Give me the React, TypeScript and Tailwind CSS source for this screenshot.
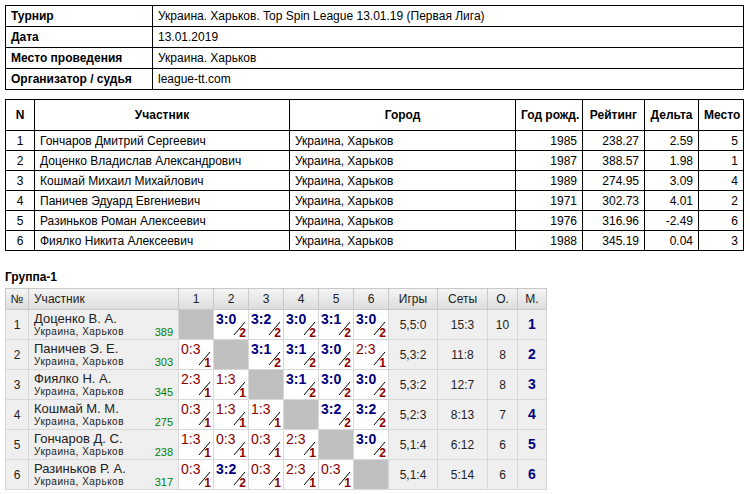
import React from "react";

const players = [
  ["1","Гончаров Дмитрий Сергеевич","Украина, Харьков","1985","238.27","2.59","5"],
  ["2","Доценко Владислав Александрович","Украина, Харьков","1987","388.57","1.98","1"],
  ["3","Кошмай Михаил Михайлович","Украина, Харьков","1989","274.95","3.09","4"],
  ["4","Паничев Эдуард Евгениевич","Украина, Харьков","1971","302.73","4.01","2"],
  ["5","Разиньков Роман Алексеевич","Украина, Харьков","1976","316.96","-2.49","6"],
  ["6","Фиялко Никита Алексеевич","Украина, Харьков","1988","345.19","0.04","3"],
];

type G = { n: string; name: string; r: string; res: (string | null)[]; g: string; s: string; o: string; m: string };
const group: G[] = [
  { n: "1", name: "Доценко В. А.", r: "389", res: [null, "3:0", "3:2", "3:0", "3:1", "3:0"], g: "5,5:0", s: "15:3", o: "10", m: "1" },
  { n: "2", name: "Паничев Э. Е.", r: "303", res: ["0:3", null, "3:1", "3:1", "3:0", "2:3"], g: "5,3:2", s: "11:8", o: "8", m: "2" },
  { n: "3", name: "Фиялко Н. А.", r: "345", res: ["2:3", "1:3", null, "3:1", "3:0", "3:0"], g: "5,3:2", s: "12:7", o: "8", m: "3" },
  { n: "4", name: "Кошмай М. М.", r: "275", res: ["0:3", "1:3", "1:3", null, "3:2", "3:2"], g: "5,2:3", s: "8:13", o: "7", m: "4" },
  { n: "5", name: "Гончаров Д. С.", r: "238", res: ["1:3", "0:3", "0:3", "2:3", null, "3:0"], g: "5,1:4", s: "6:12", o: "6", m: "5" },
  { n: "6", name: "Разиньков Р. А.", r: "317", res: ["0:3", "3:2", "0:3", "2:3", "0:3", null], g: "5,1:4", s: "5:14", o: "6", m: "6" },
];

function Score({ v }: { v: string | null }) {
  if (v === null) return <td className="w-[35px] bg-[#c0c0c0] border border-[#d8d8d8]" />;
  const win = v.startsWith("3");
  return (
    <td className="w-[35px] h-[30px] border border-[#d8d8d8] bg-white p-0">
      <div className="relative h-[29px] w-[34px]">
        <span className={`absolute left-[2px] top-[1px] text-[14px] leading-[17px] ${win ? "font-bold text-[#000080]" : "text-[#8b0000]"}`}>{v}</span>
        <svg className="absolute left-[19px] top-[11px]" width="13" height="15" viewBox="0 0 13 15">
          <line x1="1" y1="14" x2="12" y2="1" stroke="#000" strokeWidth="1" />
        </svg>
        <span className="absolute right-[2px] bottom-[0px] text-[12px] leading-[12px] font-bold text-[#8b0000]">{win ? "2" : "1"}</span>
      </div>
    </td>
  );
}

export default function App() {
  const td = "border border-black px-[5px] whitespace-nowrap";
  return (
    <div className="bg-white w-[750px] h-[494px] text-[12px] text-black overflow-hidden" style={{ fontFamily: "'Liberation Sans', Arial, sans-serif" }}>
      <div className="pt-[5px] pl-[5px]">
        <table className="border-collapse w-[739px]">
          <tbody>
            {[
              ["Турнир", "Украина. Харьков. Top Spin League 13.01.19 (Первая Лига)"],
              ["Дата", "13.01.2019"],
              ["Место проведения", "Украина. Харьков"],
              ["Организатор / судья", "league-tt.com"],
            ].map(([a, b]) => (
              <tr key={a} className="h-[21px]">
                <td className={`${td} w-[147px] font-bold`}>{a}</td>
                <td className={td}>{b}</td>
              </tr>
            ))}
          </tbody>
        </table>
        <table className="border-collapse w-[739px] mt-[9px] table-fixed">
          <thead>
            <tr className="h-[31px] font-bold">
              <td className={`${td} w-[29px] text-center`}>N</td>
              <td className={`${td} w-[255px] text-center`}>Участник</td>
              <td className={`${td} w-[226px] text-center`}>Город</td>
              <td className={`${td} w-[67px] text-center px-[2px]`}>Год рожд.</td>
              <td className={`${td} w-[62px] text-center`}>Рейтинг</td>
              <td className={`${td} w-[54px] text-center`}>Дельта</td>
              <td className={`${td} text-center px-[2px]`}>Место</td>
            </tr>
          </thead>
          <tbody>
            {players.map((p) => (
              <tr key={p[0]} className="h-[20px]">
                <td className={`${td} text-center`}>{p[0]}</td>
                <td className={td}>{p[1]}</td>
                <td className={td}>{p[2]}</td>
                <td className={`${td} text-right`}>{p[3]}</td>
                <td className={`${td} text-right`}>{p[4]}</td>
                <td className={`${td} text-right`}>{p[5]}</td>
                <td className={`${td} text-right`}>{p[6]}</td>
              </tr>
            ))}
          </tbody>
        </table>
        <div className="font-bold mt-[19px] mb-[4px] leading-[14px]">Группа-1</div>
        <table className="border-collapse border border-[#a8a8a8] text-[12px]">
          <thead>
            <tr className="h-[21px] bg-gradient-to-b from-[#f4f4f4] to-[#dcdcdc] text-[#222]">
              <td className="w-[23px] border border-[#c8c8c8] text-center">№</td>
              <td className="w-[150px] border border-[#c8c8c8] px-[5px]">Участник</td>
              {["1","2","3","4","5","6"].map((h) => (
                <td key={h} className="w-[35px] border border-[#c8c8c8] text-center">{h}</td>
              ))}
              <td className="w-[49px] border border-[#c8c8c8] text-center">Игры</td>
              <td className="w-[50px] border border-[#c8c8c8] text-center">Сеты</td>
              <td className="w-[30px] border border-[#c8c8c8] text-center">О.</td>
              <td className="w-[29px] border border-[#c8c8c8] text-center">М.</td>
            </tr>
          </thead>
          <tbody>
            {group.map((g) => (
              <tr key={g.n} className="h-[30px] bg-[#efefef] text-[#222]">
                <td className="border border-[#d8d8d8] text-center">{g.n}</td>
                <td className="border border-[#d8d8d8] px-[5px] py-0">
                  <div className="leading-[15px] text-[13px]">{g.name}</div>
                  <div className="flex justify-between text-[10px] leading-[12px] tracking-[0.5px]">
                    <span>Украина, Харьков</span>
                    <span className="text-[#008000] text-[11px] tracking-normal">{g.r}</span>
                  </div>
                </td>
                {g.res.map((r, i) => <Score key={i} v={r} />)}
                <td className="border border-[#d8d8d8] text-center">{g.g}</td>
                <td className="border border-[#d8d8d8] text-center">{g.s}</td>
                <td className="border border-[#d8d8d8] text-center">{g.o}</td>
                <td className="border border-[#d8d8d8] text-center font-bold text-[14px] text-[#000080]">{g.m}</td>
              </tr>
            ))}
          </tbody>
        </table>
      </div>
    </div>
  );
}
